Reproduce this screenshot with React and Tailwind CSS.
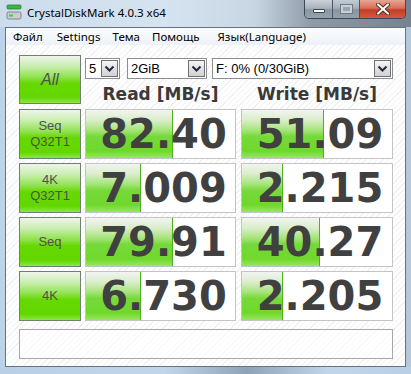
import React from "react";

const Chevron = () => (
  <svg width="11" height="7" viewBox="0 0 11 7">
    <polyline points="1.5,1.5 5.5,5.5 9.5,1.5" fill="none" stroke="#1b2a48" strokeWidth="2" />
  </svg>
);

function Combo({ w, text }) {
  return (
    <div className={`flex h-[21px] items-center border border-[#8a8f97] bg-white ${w}`}>
      <span className="flex-1 pl-[3px] text-[13px] leading-none text-black" style={{ fontFamily: '"Liberation Sans", Arial, sans-serif' }}>
        {text}
      </span>
      <div className="mr-[1px] flex h-[17px] w-[17px] items-center justify-center border border-[#707070] bg-[linear-gradient(to_bottom,#f5f5f5,#e2e2e2_50%,#d2d2d2)]">
        <Chevron />
      </div>
    </div>
  );
}

function GreenButton({ children, h = "h-[50px]" }) {
  return (
    <div
      className={`flex w-[62px] flex-col items-center justify-center border border-[#6f7f70] bg-[linear-gradient(to_bottom,#eef5ea_0%,#c9eeb0_22%,#8fe24e_45%,#66d800_58%,#62d800_88%,#8de64a_100%)] text-[#505050] ${h}`}
      style={{ fontFamily: '"Liberation Sans", Arial, sans-serif' }}
    >
      {children}
    </div>
  );
}

function Cell({ value, bar, w }) {
  return (
    <div className={`relative h-[50px] border border-[#c4c4c4] bg-white ${w}`}>
      <div
        className="absolute bottom-0 left-0 top-0 border-r border-[#4fae22] bg-[linear-gradient(to_bottom,#f2f4f0_0%,#dbeecd_20%,#a6e47a_42%,#76d93a_55%,#6fd82c_85%,#9ae65f_100%)]"
        style={{ width: bar }}
      />
      <div
        className="relative flex h-full items-center justify-center pl-[6px] text-[40px] font-bold leading-none text-[#404040]"
        style={{ fontFamily: '"DejaVu Sans", Verdana, sans-serif' }}
      >
        {value}
      </div>
    </div>
  );
}

const rows = [
  { label: ["Seq", "Q32T1"], r: "82.40", rb: 87, w: "51.09", wb: 82 },
  { label: ["4K", "Q32T1"], r: "7.009", rb: 55, w: "2.215", wb: 41 },
  { label: ["Seq"], r: "79.91", rb: 87, w: "40.27", wb: 78 },
  { label: ["4K"], r: "6.730", rb: 55, w: "2.205", wb: 41 },
];

export default function App() {
  return (
    <div className="flex h-[374px] w-[411px] flex-col overflow-hidden bg-[linear-gradient(to_right,#bcd3ea_0%,#c6d9ec_60%,#a9bccf_80%,#b5c8dc_100%)]">
      {/* title bar */}
      <div className="flex h-[27px] bg-[linear-gradient(to_right,#cddcec_0%,#d6e3f0_40%,#c8d6e4_62%,#8e9aa6_76%,#76838f_100%)]">
        <div className="ml-[6px] mt-[4px] h-[16px] w-[16px]">
          <svg width="16" height="16" viewBox="0 0 16 16">
            <rect x="1" y="1" width="14" height="4" rx="1" fill="#35b846" stroke="#1f7a2c" strokeWidth="0.7" />
            <rect x="1" y="8" width="14" height="7" rx="1.5" fill="#c9cdd1" stroke="#6a7177" strokeWidth="0.8" />
            <rect x="3" y="10.5" width="4" height="2" fill="#3fcf4a" />
          </svg>
        </div>
        <div
          className="ml-[5px] mt-[5px] text-[11.5px] leading-[16px] text-black"
          style={{ fontFamily: '"Noto Sans", "Open Sans", sans-serif' }}
        >
          CrystalDiskMark 4.0.3 x64
        </div>
        <div className="flex-1" />
        <div className="mr-[5px] flex h-[19px] overflow-hidden rounded-b-[5px] border border-t-0 border-[#3c4756]">
          <div className="flex w-[28px] items-center justify-center border-r border-[#4a5563] bg-[linear-gradient(to_bottom,#c9d1d9_0%,#a9b3bd_45%,#8a96a2_55%,#96a2ae_100%)]">
            <div className="mt-[3px] h-[4px] w-[12px] rounded-[1px] border border-[#3a4350] bg-white" />
          </div>
          <div className="flex w-[27px] items-center justify-center border-r border-[#4a5563] bg-[linear-gradient(to_bottom,#c3ccd5_0%,#a5afb9_45%,#8894a0_55%,#95a1ad_100%)]">
            <div className="h-[8px] w-[11px] border-2 border-[#c8cfd6] bg-[#9aa5b0] outline outline-1 outline-[#6f7a86]" />
          </div>
          <div className="flex w-[45px] items-center justify-center bg-[linear-gradient(to_bottom,#e7a493_0%,#d8705c_45%,#c43d25_55%,#d35a3e_100%)]">
            <svg width="14" height="12" viewBox="0 0 14 12">
              <path d="M2 1.5 L12 10.5 M12 1.5 L2 10.5" stroke="#4a2a22" strokeWidth="4" strokeLinecap="round" />
              <path d="M2 1.5 L12 10.5 M12 1.5 L2 10.5" stroke="#ffffff" strokeWidth="2.2" strokeLinecap="round" />
            </svg>
          </div>
        </div>
      </div>

      {/* window body */}
      <div className="flex px-[5px]">
        <div className="flex h-[340px] flex-1 flex-col border border-[#62748a]">
          {/* menu */}
          <div
            className="flex h-[17px] items-center bg-[linear-gradient(to_bottom,#fbfcfe,#edf2f8)] text-[11.5px] leading-none text-black"
            style={{ fontFamily: '"Noto Sans", "Open Sans", sans-serif' }}
          >
            <span className="ml-[7px]">Файл</span>
            <span className="ml-[14px]">Settings</span>
            <span className="ml-[12px]">Тема</span>
            <span className="ml-[12px]">Помощь</span>
            <span className="ml-[18px]">Язык(Language)</span>
          </div>
          {/* client */}
          <div className="flex flex-1 flex-col bg-[repeating-linear-gradient(135deg,#ffffff_0px,#ffffff_3px,#f1f1f1_3px,#f1f1f1_4px)] pl-[13px] pt-[10px]">
            <div className="flex">
              <GreenButton h="h-[49px]">
                <span className="text-[16px] italic leading-none">All</span>
              </GreenButton>
              <div className="ml-[4px] flex w-[308px] flex-col">
                <div className="mt-[3px] flex">
                  <Combo w="w-[35px]" text="5" />
                  <Combo w="w-[80px] ml-[7px]" text="2GiB" />
                  <Combo w="w-[181px] ml-[5px]" text="F: 0% (0/30GiB)" />
                </div>
                <div
                  className="mt-[5px] flex h-[20px] items-center text-[17px] font-bold leading-none text-[#3a3a3a]"
                  style={{ fontFamily: '"DejaVu Sans", Verdana, sans-serif' }}
                >
                  <div className="w-[151px] text-center">Read [MB/s]</div>
                  <div className="ml-[5px] w-[152px] text-center">Write [MB/s]</div>
                </div>
              </div>
            </div>
            <div className="mt-[5px] flex flex-col gap-[4px]">
              {rows.map((r, i) => (
                <div key={i} className="flex">
                  <GreenButton>
                    {r.label.map((l, j) => (
                      <span key={j} className="text-[13px] leading-[16px]">
                        {l}
                      </span>
                    ))}
                  </GreenButton>
                  <Cell value={r.r} bar={r.rb} w="ml-[4px] w-[151px]" />
                  <Cell value={r.w} bar={r.wb} w="ml-[5px] w-[152px]" />
                </div>
              ))}
            </div>
            <div className="mt-[8px] h-[30px] w-[374px] border border-[#a8a8a8] bg-white/60" />
          </div>
        </div>
      </div>
      <div className="flex-1 bg-[linear-gradient(to_right,#b8cfe6_0%,#c2d6ea_40%,#8fa3b8_60%,#c2d6ea_80%,#b8cfe6_100%)]" />
    </div>
  );
}
